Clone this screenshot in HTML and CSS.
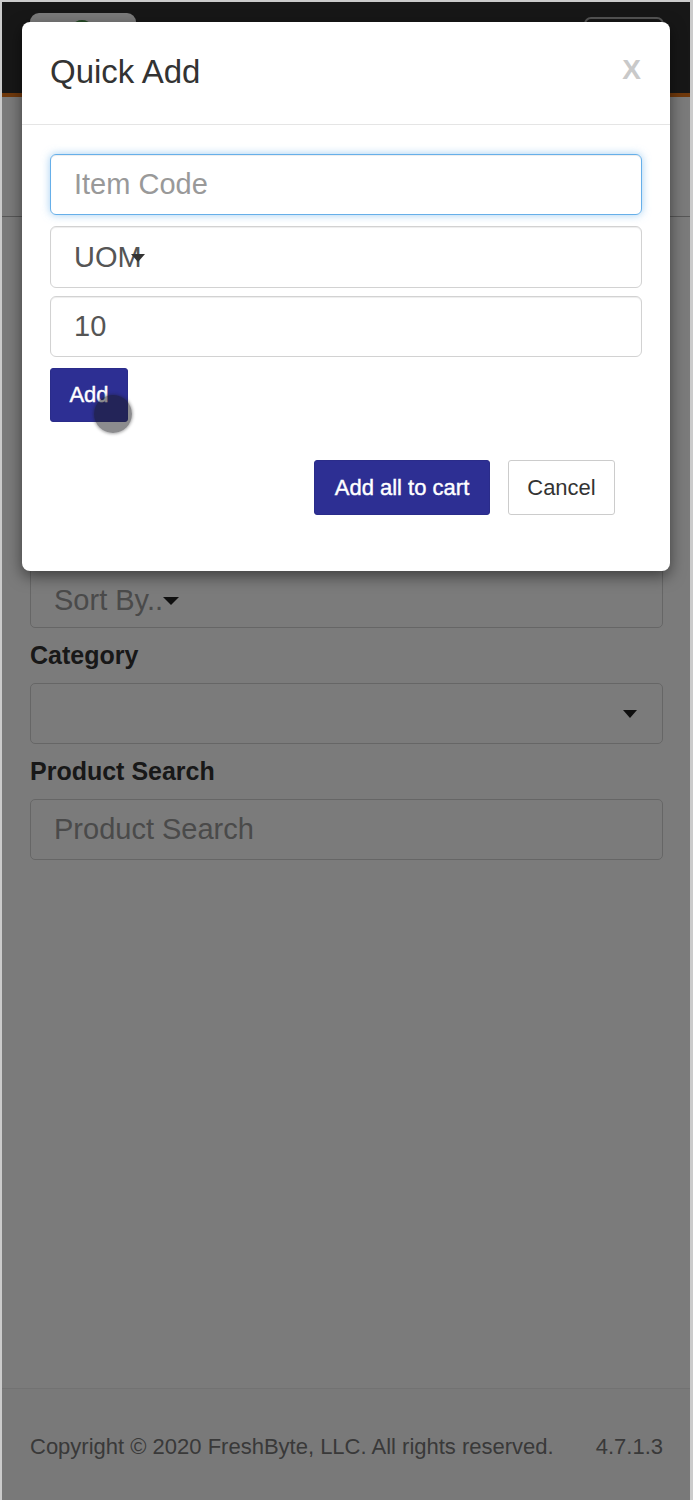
FILE: index.html
```html
<!DOCTYPE html>
<html lang="en">
<head>
<meta charset="utf-8">
<title>Quick Add</title>
<link rel="stylesheet" href="styles.css">
</head>
<body>
<div class="frame">
  <div class="page">
    <header class="topbar">
      <div class="logo-btn"><span class="leaf"></span></div>
      <div class="menu-btn"></div>
    </header>
    <div class="accent"></div>
    <div class="subbar"></div>
    <main class="filters">
      <div class="form-group">
        <label class="label">Sort</label>
        <div class="field select-field sort-field"><span class="muted">Sort By..</span><span class="caret caret-inline"></span></div>
      </div>
      <div class="form-group">
        <label class="label">Category</label>
        <div class="field select-field select-right"><span class="caret"></span></div>
      </div>
      <div class="form-group">
        <label class="label">Product Search</label>
        <div class="field"><span class="muted">Product Search</span></div>
      </div>
    </main>
    <footer class="footer">
      <span>Copyright © 2020 FreshByte, LLC. All rights reserved.</span>
      <span>4.7.1.3</span>
    </footer>
  </div>

  <div class="backdrop"></div>

  <div class="modal">
    <div class="modal-header">
      <h4 class="modal-title">Quick Add</h4>
      <span class="close">X</span>
    </div>
    <div class="modal-body">
      <div class="input focus"><span class="placeholder">Item Code</span></div>
      <div class="input uom"><span class="value">UOM</span><span class="caret caret-uom"></span></div>
      <div class="input qty"><span class="value">10</span></div>
      <div class="add-row">
        <button class="btn btn-primary btn-add">Add</button>
        <span class="touch"></span>
      </div>
      <div class="modal-footer">
        <button class="btn btn-primary btn-cart">Add all to cart</button>
        <button class="btn btn-default">Cancel</button>
      </div>
    </div>
  </div>
</div>
</body>
</html>
```

FILE: styles.css
```css
* { box-sizing: border-box; }

html, body {
  margin: 0;
  padding: 0;
  background: #cbcbcb;
}

body {
  font-family: "Liberation Sans", Arial, sans-serif;
}

.frame {
  position: relative;
  width: 693px;
  height: 1500px;
  border-top: 2px solid #cbcbcb;
  border-left: 2px solid #cbcbcb;
  border-right: 3px solid #cbcbcb;
  overflow: hidden;
  background: #fff;
}

.page {
  display: flex;
  flex-direction: column;
  height: 1498px;
  background: #fff;
}

.topbar {
  height: 91px;
  background: #303030;
  display: flex;
  justify-content: space-between;
  align-items: flex-start;
  padding: 11px 26px 0 28px;
}

.logo-btn {
  width: 106px;
  height: 60px;
  border-radius: 9px;
  background: #fff;
  padding: 7px 0 0 44px;
}

.leaf {
  display: block;
  width: 16px;
  height: 10px;
  border-radius: 50% 50% 0 0;
  background: #4f9a4f;
}

.menu-btn {
  width: 80px;
  height: 50px;
  margin-top: 4px;
  border: 2px solid #b0b0b0;
  border-radius: 7px;
}

.accent {
  height: 4px;
  background: #e8761a;
}

.subbar {
  height: 120px;
  border-bottom: 1px solid #b4b4b4;
  background: #fff;
}

.filters {
  flex: 1;
  padding: 307px 27px 0 28px;
}

.form-group {
  margin-bottom: 12px;
}

.label {
  display: block;
  font-size: 25px;
  line-height: 30px;
  font-weight: bold;
  color: #333;
  margin-bottom: 13px;
}

.field {
  position: relative;
  height: 61px;
  border: 1px solid #d4d4d4;
  border-radius: 5px;
  padding: 0 23px;
  display: flex;
  align-items: center;
  font-size: 29px;
  color: #555;
}

.sort-field {
  padding-top: 5px;
}

.muted {
  color: #999;
}

.select-right {
  justify-content: flex-end;
  padding-right: 25px;
}

.caret {
  display: inline-block;
  width: 0;
  height: 0;
  border-top: 8px solid #222;
  border-left: 7px solid transparent;
  border-right: 7px solid transparent;
}

.caret-inline {
  margin-left: 0;
  margin-top: 2px;
  border-left-width: 8px;
  border-right-width: 8px;
}

.footer {
  height: 112px;
  border-top: 1px solid #ececec;
  background: #fbfbfb;
  display: flex;
  justify-content: space-between;
  align-items: center;
  padding: 4px 27px 0 28px;
  font-size: 22px;
  color: #777;
}

.backdrop {
  position: absolute;
  inset: 0;
  background: rgba(0, 0, 0, 0.518);
}

.modal {
  position: absolute;
  left: 20px;
  top: 20px;
  width: 648px;
  height: 549px;
  background: #fff;
  border-radius: 8px;
  box-shadow: 0 5px 15px rgba(0, 0, 0, 0.5);
}

.modal-header {
  height: 103px;
  border-bottom: 1px solid #e5e5e5;
  display: flex;
  align-items: center;
  justify-content: space-between;
  padding: 0 29px 2px 28px;
}

.modal-title {
  margin: 0;
  font-size: 33px;
  font-weight: normal;
  color: #333;
  line-height: 1.1;
}

.close {
  font-size: 28px;
  font-weight: bold;
  color: #c9c9c9;
  line-height: 1;
  margin-top: -4px;
}

.modal-body {
  padding: 29px 28px 0 28px;
}

.input {
  height: 61px;
  border: 1px solid #d2d2d2;
  border-radius: 6px;
  padding: 0 23px;
  display: flex;
  align-items: center;
  font-size: 29px;
  color: #555;
  margin-bottom: 11px;
  box-shadow: inset 0 1px 1px rgba(0, 0, 0, 0.075);
}

.input.focus {
  border-color: #66afe9;
  box-shadow: inset 0 1px 1px rgba(0, 0, 0, 0.075), 0 0 8px rgba(102, 175, 233, 0.6);
}

.input.uom {
  height: 62px;
  margin-bottom: 8px;
}

.placeholder {
  color: #999;
}

.caret-uom {
  margin-left: -11px;
  margin-top: 2px;
  border-top-color: #333;
}

.add-row {
  position: relative;
  display: flex;
}

.btn {
  font-family: "Liberation Sans", Arial, sans-serif;
  font-size: 22px;
  border-radius: 3px;
  border: 1px solid transparent;
  cursor: pointer;
  line-height: 1;
}

.btn-primary {
  background: #2d2f93;
  border-color: #2a2c8a;
  color: #fff;
  -webkit-text-stroke: 0.4px #fff;
}

.btn-add {
  width: 78px;
  height: 54px;
  padding: 0;
}

.touch {
  position: absolute;
  left: 44px;
  top: 27px;
  width: 38px;
  height: 38px;
  border-radius: 50%;
  background: rgba(25, 25, 30, 0.5);
  box-shadow: 0 0 3px 1px rgba(25, 25, 30, 0.35);
}

.modal-footer {
  display: flex;
  justify-content: flex-end;
  gap: 18px;
  margin-top: 38px;
  padding-right: 27px;
}

.btn-cart {
  width: 176px;
  height: 55px;
  padding: 0;
}

.btn-default {
  width: 107px;
  height: 55px;
  padding: 0;
  background: #fff;
  border-color: #ccc;
  color: #333;
}
```
